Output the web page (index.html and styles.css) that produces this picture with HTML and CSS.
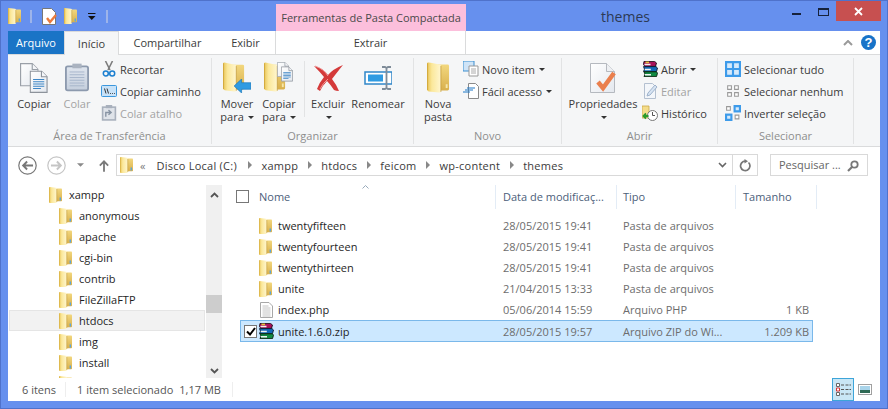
FILE: index.html
```html
<!DOCTYPE html>
<html lang="pt">
<head>
<meta charset="utf-8">
<title>themes</title>
<link rel="stylesheet" href="styles.css">
</head>
<body>
<svg class="defs" xmlns="http://www.w3.org/2000/svg">
  <defs>
    <linearGradient id="leaf" x1="0" y1="0" x2="1" y2="0"><stop offset="0" stop-color="#e9c558"/><stop offset=".35" stop-color="#fbe89b"/><stop offset="1" stop-color="#fff6cf"/></linearGradient>
    <linearGradient id="back" x1="0" y1="0" x2="0" y2="1"><stop offset="0" stop-color="#f2d77e"/><stop offset="1" stop-color="#d9b04c"/></linearGradient>
    <linearGradient id="page" x1="0" y1="0" x2="1" y2="1"><stop offset="0" stop-color="#ffffff"/><stop offset="1" stop-color="#e4e8ee"/></linearGradient>
    <linearGradient id="clip" x1="0" y1="0" x2="0" y2="1"><stop offset="0" stop-color="#dfe5ee"/><stop offset="1" stop-color="#c5cfdd"/></linearGradient>
    <symbol id="folder" viewBox="0 0 13 16">
      <path d="M6 1.500h6.200q.8 0 .8.8v11.200q0 .8-.8.8H6z" fill="url(#back)"/>
      <path d="M0 .8Q0 0 .8 0L7 .8q.8.1.8.9v13.500q0 .8-.8.8H.9q-.9 0-.9-.8z" fill="url(#leaf)"/>
      <path d="M.4.500v14.800" stroke="#d9b246" stroke-width=".8"/>
      <path d="M7.800 2v13" stroke="#c9a443" stroke-width=".7"/>
      <rect x="10.600" y="10.500" width="1.400" height="3" fill="#5aa6dd"/>
    </symbol>
    <symbol id="bigfolder" viewBox="0 0 24 33">
      <path d="M9 2.500h12.500q1.500 0 1.500 1.500v24q0 1.500-1.500 1.500H9z" fill="url(#back)"/>
      <path d="M0 1.500Q0 0 1.500 0L13 2.500q1.500.3 1.500 1.800V30q0 2-2 1.700L2 30.500Q0 30.200 0 28z" fill="url(#leaf)"/>
      <path d="M.6 1v28" stroke="#d3aa3e" stroke-width="1.100"/>
      <path d="M14.500 4v27" stroke="#c19a3b" stroke-width=".8"/>
      <rect x="19.500" y="23" width="2" height="4" fill="#f6e6a8"/>
    </symbol>
    <symbol id="arrowblue" viewBox="0 0 18 15"><path d="M0 7.500 8 0v4h10v7H8v4z" fill="#2f9be2" stroke="#1774b8" stroke-width=".7"/></symbol>
    <symbol id="doc" viewBox="0 0 16 20">
      <path d="M.5.500h10l5 5v14H.5z" fill="url(#page)" stroke="#9aa0a8"/>
      <path d="M10.500.500v5h5" fill="#f4f6f9" stroke="#9aa0a8"/>
    </symbol>
    <symbol id="doclines" viewBox="0 0 16 20">
      <path d="M.5.500h10l5 5v14H.5z" fill="url(#page)" stroke="#8d939b"/>
      <path d="M10.500.500v5h5" fill="#f4f6f9" stroke="#8d939b"/>
      <path d="M3 8h10M3 10h10M3 12h10M3 14h10M3 16h7" stroke="#3e86c6"/>
    </symbol>
    <symbol id="rar" viewBox="0 0 16 16">
      <path d="M2 .4h10.500l2 1.600-1 3.400H3L1.500 3.500z" fill="#a8125a" stroke="#1b0a14" stroke-width=".9"/>
      <path d="M1.500 5.600H14l1.500 1.400-1 3.600H1.500l1-2.400z" fill="#1468b8" stroke="#0a1a2e" stroke-width=".9"/>
      <path d="M2 10.800h12.500l1 1.400-1 3.400H2l1-2.400z" fill="#128a42" stroke="#08200f" stroke-width=".9"/>
      <path d="M2.500 3.400h6M2.800 8.600h6M3 13.700h6" stroke="#f2f2f2" stroke-width="1.500"/>
      <rect x="3.500" y=".6" width="3.500" height="1.600" fill="#e8c33e"/>
    </symbol>
    <symbol id="backc" viewBox="0 0 24 24">
      <circle cx="12" cy="12" r="11" fill="#fff" stroke="currentColor" stroke-width="1.500"/>
      <path d="M19 12H7M11.500 7 6.500 12l5 5" fill="none" stroke="currentColor" stroke-width="2.400"/>
    </symbol>
  </defs>
</svg>

<div class="window">
  <header class="titlebar">
    <svg class="ic-s qat-first"><use href="#folder"/></svg>
    <span class="qat-sep"></span>
    <svg class="ic-qdoc" viewBox="0 0 15 17"><path d="M.5.500h9l4 4v12H.5z" fill="#fff" stroke="#777"/><path d="M5 10l3 4 6-7" fill="none" stroke="#ea7a3c" stroke-width="2.400"/></svg>
    <svg class="ic-s qat-f2"><use href="#folder"/></svg>
    <svg class="qat-drop" viewBox="0 0 8 7"><path d="M0 0h7.500v1H0zM0 3h7.500L3.750 7z" fill="#111"/></svg>
    <span class="qat-sep qat-sep2"></span>
    <div class="context-tab">Ferramentas de Pasta Compactada</div>
    <div class="win-title">themes</div>
    <div class="win-ctrls">
      <span class="ctl-min"></span>
      <span class="ctl-max"></span>
      <span class="ctl-close"><svg viewBox="0 0 9 9" width="9" height="9"><path d="M1 1l7 7M8 1 1 8" stroke="#fff" stroke-width="1.800"/></svg></span>
    </div>
  </header>

  <div class="client">
    <nav class="tabs">
      <div class="tab tab-file">Arquivo</div>
      <div class="tab tab-active">Início</div>
      <div class="tab tab-share">Compartilhar</div>
      <div class="tab tab-view">Exibir</div>
      <div class="tab tab-extract">Extrair</div>
      <div class="tab-end">
        <svg class="collapse" viewBox="0 0 10 6" width="10" height="6"><path d="M1 5l4-4 4 4" fill="none" stroke="#9a9a9a" stroke-width="2"/></svg>
        <span class="help">?</span>
      </div>
    </nav>

    <section class="ribbon">
      <div class="group g1">
        <div class="group-body">
          <div class="big w-copy">
            <div class="big-ic"><svg viewBox="0 0 30 32" width="28" height="30"><use href="#doc" x="0" y="0" width="20" height="25"/><use href="#doclines" x="10" y="8" width="20" height="24"/></svg></div>
            <span>Copiar</span>
          </div>
          <div class="big w-paste dis">
            <div class="big-ic"><svg viewBox="0 0 26 30" width="24" height="29"><rect x="1" y="3" width="24" height="26" rx="2" fill="url(#clip)" stroke="#8d9aae" stroke-width="2"/><rect x="8" y="0" width="10" height="5" fill="#aab3c0"/><path d="M5 9h16M5 12h16M5 15h16M5 18h16M5 21h16M5 24h16" stroke="#a5b4ca"/></svg></div>
            <span>Colar</span>
          </div>
          <div class="stack st1">
            <div class="small"><svg class="sm-ic" viewBox="0 0 16 16"><path d="M4.500 0l4.500 9M11.500 0 7 9" stroke="#7d7d7d" stroke-width="1.600"/><circle cx="4.800" cy="12.500" r="2.500" fill="none" stroke="#1b7fd0" stroke-width="1.500"/><circle cx="11.200" cy="12.500" r="2.500" fill="none" stroke="#1b7fd0" stroke-width="1.500"/></svg>Recortar</div>
            <div class="small"><svg class="sm-ic" viewBox="0 0 16 12"><rect x=".5" y=".5" width="15" height="11" rx="1" fill="#c8e2f8" stroke="#3b97dd"/><path d="M3.500 3.500l1.500 5M6 3.500l1.500 5M9 8.500h.8M11 8.500h.8M13 8.500h.8" stroke="#333"/></svg>Copiar caminho</div>
            <div class="small dis"><svg class="sm-ic" viewBox="0 0 14 15"><rect x="1" y="2" width="12" height="12" fill="#dfe3e9" stroke="#a8b0bc" stroke-width="1.500"/><rect x="4" y="0" width="6" height="3" fill="#a8b0bc"/><path d="M4 11V7h5M6.500 4.800 9 7 6.500 9.200" fill="none" stroke="#8793a3" stroke-width="1.300"/></svg>Colar atalho</div>
          </div>
        </div>
        <div class="group-label">Área de Transferência</div>
      </div>

      <div class="group g2">
        <div class="group-body">
          <div class="big w-move">
            <div class="big-ic"><svg viewBox="0 0 28 32" width="28" height="32"><use href="#bigfolder" x="0" y="0" width="22" height="31"/><use href="#arrowblue" x="11" y="17" width="17" height="14"/></svg></div>
            <span>Mover<br>para <i class="caret"></i></span>
          </div>
          <div class="big w-cto">
            <div class="big-ic"><svg viewBox="0 0 30 32" width="30" height="32"><use href="#bigfolder" x="0" y="0" width="22" height="31"/><use href="#doc" x="13" y="0" width="12" height="15"/><use href="#doclines" x="17" y="4" width="12" height="16"/></svg></div>
            <span>Copiar<br>para <i class="caret"></i></span>
          </div>
          <span class="inner-sep"></span>
          <div class="big w-del">
            <div class="big-ic"><svg viewBox="0 0 30 28" width="30" height="28"><path d="M1 2q9 2 14 9Q20 5 30 1q-1 1-11 14 4 5 7 12-3 0-5-1-4-6-7-9-4 4-7 10l-3-2q2-6 7-12Q7 8 1 2z" fill="#d43a3a"/><path d="M2 2q9 3 13 10M15 15q-5 4-8 10" stroke="#f19a9a" fill="none"/></svg></div>
            <span>Excluir<br><i class="caret"></i></span>
          </div>
          <div class="big w-ren">
            <div class="big-ic"><svg viewBox="0 0 28 24" width="28" height="24"><rect x="1" y="6" width="27" height="12" fill="#fff" stroke="#2f86c9" stroke-width="1.500"/><rect x="4" y="8.500" width="15" height="7" fill="#2f9be2"/><path d="M18 1h3l1.500 1L24 1h3M22.500 2v20M18 23h3l1.500-1 1.500 1h3" fill="none" stroke="#7f8c99" stroke-width="1.800"/></svg></div>
            <span>Renomear</span>
          </div>
        </div>
        <div class="group-label">Organizar</div>
      </div>

      <div class="group g3">
        <div class="group-body">
          <div class="big w-new">
            <div class="big-ic"><svg viewBox="0 0 24 33" width="23" height="32"><use href="#bigfolder"/></svg></div>
            <span>Nova<br>pasta</span>
          </div>
          <div class="stack st3">
            <div class="small"><svg class="sm-ic" viewBox="0 0 16 16"><rect x="0" y="0" width="11" height="10" fill="#cfe4f7" stroke="#3a8ed0"/><path d="M6 5h9v10H6z" fill="#fff" stroke="#999"/><path d="M8 8h5M8 10h5M8 12h5" stroke="#aaa"/></svg>Novo item <i class="caret"></i></div>
            <div class="small"><svg class="sm-ic" viewBox="0 0 16 16"><path d="M5.500.500h7l3 3v12h-10z" fill="#fff" stroke="#8a8a8a"/><path d="M0 9h7M2 7h8M4 5h8" stroke="#1e78c8" stroke-width="1.100"/></svg>Fácil acesso <i class="caret"></i></div>
          </div>
        </div>
        <div class="group-label">Novo</div>
      </div>

      <div class="group g4">
        <div class="group-body">
          <div class="big w-prop">
            <div class="big-ic"><svg viewBox="0 0 27 30" width="27" height="30"><path d="M.5.500h16l8 8v21H.5z" fill="url(#page)" stroke="#b5b9bf"/><path d="M16.500.500v8h8" fill="#eef0f3" stroke="#b5b9bf"/><path d="M8 19l5 6L24 10" fill="none" stroke="#ea7f4d" stroke-width="4.500"/></svg></div>
            <span>Propriedades<br><i class="caret"></i></span>
          </div>
          <div class="stack st4">
            <div class="small"><svg class="sm-ic"><use href="#rar"/></svg>Abrir <i class="caret"></i></div>
            <div class="small dis"><svg class="sm-ic" viewBox="0 0 16 16"><path d="M2.500.500h8l3 3v12h-11z" fill="#f3f6fa" stroke="#b4c0d0"/><path d="M5 13l1-3 7-8 2 2-7 8z" fill="#d6e3f2" stroke="#9fb3cc"/></svg>Editar</div>
            <div class="small"><svg class="sm-ic" viewBox="0 0 16 16"><path d="M0 1h7v12H0z" fill="#f4dc8a" stroke="#caa847" stroke-width=".8"/><circle cx="10.500" cy="10.500" r="5" fill="#fff" stroke="#777"/><path d="M10.500 7v3.500H13" fill="none" stroke="#555"/><path d="M1.500 11h5M4 8.500 1.500 11 4 13.500" fill="none" stroke="#2b9a2b" stroke-width="1.800"/></svg>Histórico</div>
          </div>
        </div>
        <div class="group-label">Abrir</div>
      </div>

      <div class="group g5">
        <div class="group-body">
          <div class="stack st5">
            <div class="small"><svg class="sm-ic" viewBox="0 0 15 15"><rect width="15" height="15" fill="#3d9bea"/><path d="M2 2h4.500v4.500H2zM8.500 2H13v4.500H8.500zM2 8.500h4.500V13H2zM8.500 8.500H13V13H8.500z" fill="#d6eafb"/></svg>Selecionar tudo</div>
            <div class="small"><svg class="sm-ic" viewBox="0 0 15 15"><path d="M2.500 2.500h3.500v3.500H2.500zM9 2.500h3.500v3.500H9zM2.500 9h3.500v3.500H2.500zM9 9h3.500v3.500H9z" fill="#fff" stroke="#999"/></svg>Selecionar nenhum</div>
            <div class="small"><svg class="sm-ic" viewBox="0 0 15 15"><rect x="8" y="0" width="7" height="7" fill="#3d9bea"/><rect x="0" y="8" width="7" height="7" fill="#3d9bea"/><path d="M10 2h3v3h-3zM2 10h3v3H2z" fill="#d6eafb"/><path d="M1.500 1.500h3.500v3.500H1.500zM9.500 9.500H13V13H9.500z" fill="#fff" stroke="#999"/></svg>Inverter seleção</div>
          </div>
        </div>
        <div class="group-label">Selecionar</div>
      </div>
    </section>

    <div class="navbar">
      <svg class="nav-back"><use href="#backc"/></svg>
      <svg class="nav-fwd"><g transform="matrix(-1 0 0 1 19 0)"><use href="#backc" width="19" height="19"/></g></svg>
      <svg class="nav-drop" viewBox="0 0 10 5"><path d="M0 0h10L5 5z" fill="#8a8a8a"/></svg>
      <svg class="nav-up" viewBox="0 0 12 14"><path d="M6 14V2M1 6.500 6 1.500l5 5" fill="none" stroke="#7a7a7a" stroke-width="2.200"/></svg>
      <div class="address">
        <svg class="ic-s addr-ic"><use href="#folder"/></svg>
        <span class="crumb-dbl">«</span>
        <span class="crumb crumb-root">Disco Local (C:)</span><i class="chev"></i>
        <span class="crumb">xampp</span><i class="chev"></i>
        <span class="crumb">htdocs</span><i class="chev"></i>
        <span class="crumb">feicom</span><i class="chev"></i>
        <span class="crumb">wp-content</span><i class="chev"></i>
        <span class="crumb">themes</span>
        <svg class="addr-down" viewBox="0 0 9 6" width="9" height="6"><path d="M1 1l3.500 3.500L8 1" fill="none" stroke="#666" stroke-width="1.600"/></svg>
        <span class="addr-refresh"><svg viewBox="0 0 12 13" width="12" height="13"><path d="M9.500 3.500a4.700 4.700 0 1 1-3-1.300" fill="none" stroke="#777" stroke-width="1.700"/><path d="M5.500 0l3.500 2.200L5.500 4.500z" fill="#777"/></svg></span>
      </div>
      <div class="search">Pesquisar ...
        <svg class="search-ic" viewBox="0 0 12 12" width="12" height="12"><circle cx="7.500" cy="4.500" r="3.200" fill="none" stroke="#777" stroke-width="1.800"/><path d="M5 7l-4 4" stroke="#777" stroke-width="2.200"/></svg>
      </div>
    </div>

    <div class="content">
      <aside class="tree">
        <div class="tree-rows">
          <div class="node n0"><svg class="ic-s"><use href="#folder"/></svg>xampp</div>
          <div class="node"><svg class="ic-s"><use href="#folder"/></svg>anonymous</div>
          <div class="node"><svg class="ic-s"><use href="#folder"/></svg>apache</div>
          <div class="node"><svg class="ic-s"><use href="#folder"/></svg>cgi-bin</div>
          <div class="node"><svg class="ic-s"><use href="#folder"/></svg>contrib</div>
          <div class="node"><svg class="ic-s"><use href="#folder"/></svg>FileZillaFTP</div>
          <div class="node node-sel"><svg class="ic-s"><use href="#folder"/></svg>htdocs</div>
          <div class="node"><svg class="ic-s"><use href="#folder"/></svg>img</div>
          <div class="node"><svg class="ic-s"><use href="#folder"/></svg>install</div>
          <div class="node"><svg class="ic-s"><use href="#folder"/></svg></div>
        </div>
        <div class="scrollbar">
          <svg viewBox="0 0 9 6" width="9" height="6" class="sb-up"><path d="M1 5l3.500-3.500L8 5" fill="none" stroke="#555" stroke-width="1.800"/></svg>
          <span class="sb-thumb"></span>
          <svg viewBox="0 0 9 6" width="9" height="6" class="sb-down"><path d="M1 1l3.500 3.500L8 1" fill="none" stroke="#555" stroke-width="1.800"/></svg>
        </div>
      </aside>
      <main class="files">
        <div class="head">
          <span class="head-check"></span>
          <div class="hcol hc-name">Nome<svg class="sort" viewBox="0 0 7 4" width="7" height="4"><path d="M.5 3.500l3-3 3 3" fill="none" stroke="#9ab" /></svg></div>
          <div class="hcol hc-date">Data de modificaç...</div>
          <div class="hcol hc-type">Tipo</div>
          <div class="hcol hc-size">Tamanho</div>
        </div>
        <div class="rows">
          <div class="row"><span></span><svg class="ic-s ic-row"><use href="#folder"/></svg><span class="nm">twentyfifteen</span><span>28/05/2015 19:41</span><span>Pasta de arquivos</span><span></span></div>
          <div class="row"><span></span><svg class="ic-s ic-row"><use href="#folder"/></svg><span class="nm">twentyfourteen</span><span>28/05/2015 19:41</span><span>Pasta de arquivos</span><span></span></div>
          <div class="row"><span></span><svg class="ic-s ic-row"><use href="#folder"/></svg><span class="nm">twentythirteen</span><span>28/05/2015 19:41</span><span>Pasta de arquivos</span><span></span></div>
          <div class="row"><span></span><svg class="ic-s ic-row"><use href="#folder"/></svg><span class="nm">unite</span><span>21/04/2015 13:33</span><span>Pasta de arquivos</span><span></span></div>
          <div class="row"><span></span><svg class="ic-php" viewBox="0 0 13 16"><path d="M.5.500h8.500l3.500 3.500v11.500H.5z" fill="#fff" stroke="#a8a8a8"/><path d="M2.500 4h6M2.500 6h8M2.500 8h8M2.500 10h8M2.500 12h8M2.500 14h8" stroke="#c4c4c4"/></svg><span class="nm">index.php</span><span>05/06/2014 15:59</span><span>Arquivo PHP</span><span class="sz">1 KB</span></div>
          <div class="row row-sel"><span class="row-check"><svg viewBox="0 0 10 9" width="10" height="9"><path d="M1 4.500l3 3 5-6.500" fill="none" stroke="#000" stroke-width="2"/></svg></span><svg class="ic-rar"><use href="#rar"/></svg><span class="nm">unite.1.6.0.zip</span><span>28/05/2015 19:57</span><span>Arquivo ZIP do Wi...</span><span class="sz">1.209 KB</span></div>
        </div>
      </main>
    </div>

    <footer class="status">
      <span class="st-a">6 itens</span>
      <span class="st-b">1 item selecionado</span>
      <span class="st-c">1,17 MB</span>
      <div class="views">
        <span class="view view-on"><svg viewBox="0 0 15 13" width="15" height="13"><path d="M.5.500h3v3h-3zM.5 9.500h3v3h-3z" fill="#fff" stroke="#666"/><path d="M.5 5h3v3h-3z" fill="#fff" stroke="#d33"/><path d="M5 2h3M9.500 2h3M13.500 2h1.500M5 6.500h3M9.500 6.500h3M13.500 6.500h1.500M5 11h3M9.500 11h3M13.500 11h1.500" stroke="#555"/></svg></span>
        <span class="view view-thumb"><svg viewBox="0 0 14 11" width="14" height="11"><rect x=".5" y=".5" width="13" height="10" fill="#fff" stroke="#a0a0a0"/><rect x="2" y="2" width="10" height="4" fill="#a9d4ea"/><rect x="2" y="6" width="10" height="3" fill="#2f6a55"/></svg></span>
      </div>
    </footer>
  </div>
</div>
</body>
</html>
```
FILE: styles.css
```css
* { box-sizing: border-box; }
html, body { margin: 0; padding: 0; }
body { width: 888px; height: 409px; overflow: hidden; font: 11px/15px "Open Sans", sans-serif; color: #3b3b3b; }
.defs { display: block; width: 0; height: 0; }
svg { display: block; flex: none; }
i { font-style: normal; }

.window { width: 888px; height: 409px; background: #6690ee; border: 1px solid #4f72cb; padding: 0 7px 7px; display: flex; flex-direction: column; }

/* title bar */
.titlebar { height: 30px; display: flex; align-items: flex-start; flex: none; }
.ic-s { width: 13px; height: 16px; }
.qat-first { margin-top: 7px; }
.qat-sep { width: 2px; height: 13px; background: #9db4ea; margin: 9px 0 0 9px; }
.ic-qdoc { width: 15px; height: 17px; margin: 7px 0 0 10px; }
.qat-f2 { margin: 7px 0 0 7px; }
.qat-drop { width: 8px; height: 7px; margin: 12px 0 0 11px; }
.qat-sep2 { margin-left: 10px; }
.context-tab { width: 190px; height: 27px; margin: 3px 0 0 168px; background: #fcbfdc; color: #4a4a4a; text-align: center; padding-top: 6px; }
.win-title { margin: 7px 0 0 135px; font-size: 14px; line-height: 18px; color: #2c3a55; }
.win-ctrls { margin-left: auto; margin-right: -1px; display: flex; align-items: flex-start; height: 21px; }
.ctl-min { width: 9px; height: 2px; background: #16223c; margin: 12px 17px 0 0; }
.ctl-max { width: 11px; height: 8px; border: 1px solid #16223c; border-top-width: 2px; margin: 7px 7px 0 0; }
.ctl-close { width: 45px; height: 20px; background: #c75050; display: flex; align-items: center; justify-content: center; }

.client { flex: 1; min-height: 0; background: #fff; display: flex; flex-direction: column; }

/* tabs */
.tabs { height: 24px; flex: none; display: flex; align-items: stretch; background: #fff; border-bottom: 1px solid #dadbdc; color: #3b3b3b; }
.tab { display: flex; align-items: center; justify-content: center; }
.tab-file { width: 56px; background: #1a74c6; color: #fff; }
.tab-active { width: 55px; height: 24px; background: #f5f6f7; border: 1px solid #dadbdc; border-bottom: 0; }
.tab-share { width: 97px; }
.tab-view { width: 60px; border-right: 1px solid #dadbdc; }
.tab-extract { width: 190px; border-right: 1px solid #dadbdc; }
.tab-end { flex: 1; display: flex; align-items: center; justify-content: flex-end; padding-right: 4px; gap: 8px; }
.help { width: 15px; height: 15px; border-radius: 50%; background: #1873c8; color: #fff; font: bold 13px/15px "Liberation Sans", sans-serif; text-align: center; }

/* ribbon */
.ribbon { height: 92px; flex: none; display: flex; background: #f5f6f7; border-bottom: 1px solid #dadbdc; padding-top: 3px; }
.group { display: flex; flex-direction: column; border-right: 1px solid #e2e3e4; height: 86px; flex: none; }
.g1 { width: 204px; }
.g2 { width: 202px; }
.g3 { width: 148px; }
.g4 { width: 156px; }
.g5 { width: 136px; }
.group-body { flex: 1; display: flex; align-items: flex-start; min-height: 0; }
.group-label { height: 18px; padding-top: 2px; text-align: center; color: #8e8e8e; line-height: 15px; }
.big { display: flex; flex-direction: column; align-items: center; text-align: center; line-height: 13px; color: #3b3b3b; flex: none; }
.big-ic { height: 39px; display: flex; align-items: center; justify-content: center; }
.big > span { display: block; white-space: nowrap; }
.dis, .big.dis { color: #a3a3a3; }
.w-copy { width: 44px; margin-left: 4px; }
.w-paste { width: 42px; }
.w-move { width: 42px; margin-left: 4px; }
.w-cto { width: 42px; }
.inner-sep { width: 1px; height: 56px; background: #e2e3e4; margin: 3px 0 0 4px; }
.w-del { width: 46px; }
.w-ren { width: 54px; }
.w-new { width: 48px; }
.w-prop { width: 78px; margin-left: 2px; }
.caret { display: inline-block; width: 0; height: 0; border: 3px solid transparent; border-top: 3px solid #333; border-bottom: 0; vertical-align: 2px; margin-left: 1px; }
.stack { display: flex; flex-direction: column; flex: none; }
.small { height: 22px; display: flex; align-items: center; gap: 3px; white-space: nowrap; }
.small .caret { margin-left: 1px; }
.sm-ic { width: 16px; height: 16px; }
.st1 { margin-left: 3px; }
.st3 { margin-left: 1px; }
.st4 { margin-left: 0; }
.st5 { margin-left: 7px; }

/* nav */
.navbar { height: 38px; flex: none; display: flex; align-items: flex-start; padding-top: 7px; }
.nav-back { width: 19px; height: 19px; margin: 2px 0 0 10px; color: #777; }
.nav-fwd { width: 19px; height: 19px; margin: 2px 0 0 10px; color: #c5c5c5; }
.nav-drop { width: 7px; height: 4px; margin: 9px 0 0 11px; }
.nav-up { width: 10px; height: 12px; margin: 6px 0 0 15px; }
.address { width: 642px; height: 22px; margin-left: 7px; border: 1px solid #d9d9d9; display: flex; align-items: center; color: #3b3b3b; background: #fff; }
.addr-ic { margin-left: 3px; }
.crumb-dbl { margin: 0 11px 0 7px; color: #777; }
.crumb { letter-spacing: .25px; white-space: nowrap; }
.crumb-root { width: 82px; }
.chev { width: 0; height: 0; border-left: 4px solid #888; border-top: 4px solid transparent; border-bottom: 4px solid transparent; margin: 0 9.500px; }
.addr-down { margin-left: auto; margin-right: 5px; }
.addr-refresh { width: 25px; height: 20px; border-left: 1px solid #d9d9d9; display: flex; align-items: center; justify-content: center; }
.search { width: 98px; height: 22px; margin-left: 12px; border: 1px solid #d9d9d9; padding: 2px 0 0 8px; display: flex; align-items: flex-start; color: #666; }
.search-ic { margin: 3px 0 0 6px; }

/* content */
.content { flex: 1; min-height: 0; display: flex; }
.tree { width: 214px; flex: none; display: flex; }
.tree-rows { width: 198px; overflow: hidden; }
.node { height: 21px; display: flex; align-items: center; padding-left: 50px; gap: 7px; color: #1f1f1f; border: 1px solid transparent; }
.n0 { padding-left: 40px; margin-top: -1px; }
.node-sel { background: #f2f2f2; border-color: #e5e5e5; margin-left: 1px; padding-left: 49px; width: 196px; }
.scrollbar { width: 16px; background: #f0f0f0; display: flex; flex-direction: column; align-items: center; }
.sb-up { margin-top: 7px; }
.sb-thumb { width: 16px; height: 18px; background: #cdcdcd; margin-top: 97px; }
.sb-down { margin-top: 55px; }
.files { flex: 1; min-width: 0; }
.head { height: 30px; display: flex; align-items: flex-start; color: #4c607a; }
.head-check { width: 13px; height: 13px; border: 1px solid #777; margin: 5px 0 0 14px; flex: none; }
.hcol { height: 24px; line-height: 24px; border-right: 1px solid #e3ecf6; position: relative; flex: none; }
.hc-name { width: 237px; margin-left: 10px; }
.hc-date { width: 121px; padding-left: 7px; }
.hc-type { width: 119px; padding-left: 6px; }
.hc-size { width: 81px; padding-left: 7px; }
.sort { position: absolute; left: 103px; top: 0; }
.rows { padding-left: 18px; }
.row { width: 573px; height: 21px; display: grid; grid-template-columns: 17px 20px 225px 120px 100px 1fr; align-items: center; border: 1px solid transparent; color: #6d6d6d; padding-right: 3px; }
.nm { color: #1f1f1f; }
.sz { text-align: right; }
.ic-row { margin-left: 1px; }
.ic-php { width: 13px; height: 16px; margin-left: 2px; }
.row-sel { height: 22px; background: #cce8ff; border-color: #7ab8ea; }
.row-check { width: 13px; height: 13px; margin-left: 3px; border: 1px solid #777; background: #fff; display: flex; align-items: center; justify-content: center; }
.ic-rar { width: 16px; height: 16px; }

/* status */
.status { height: 23px; flex: none; display: flex; align-items: center; color: #555; }
.st-a { margin-left: 14px; width: 44px; border-right: 1px solid #eee; }
.st-b { margin-left: 11px; }
.st-c { margin-left: 6px; padding-right: 11px; border-right: 1px solid #eee; }
.views { margin-left: auto; display: flex; align-items: center; padding-right: 5px; height: 23px; }
.view { height: 23px; display: flex; align-items: center; justify-content: center; }
.view-on { width: 22px; background: #c9e6f5; border: 1px solid #3da5d9; margin-right: 1px; }
.view-thumb { width: 20px; }
```
